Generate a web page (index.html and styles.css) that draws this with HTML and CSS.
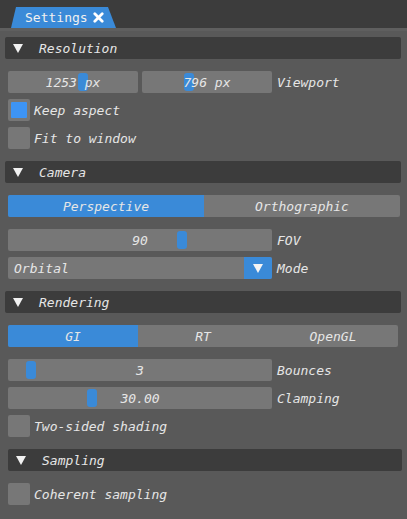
FILE: index.html
```html
<!DOCTYPE html>
<html>
<head>
<meta charset="utf-8">
<link rel="stylesheet" href="styles.css">
</head>
<body>
<div class="tabbar">
  <div class="tab">
    <span class="tab-title">Settings</span>
    <svg class="tab-close" width="11" height="11" viewBox="0 0 11 11"><path d="M1.8 1.8 L9.2 9.2 M9.2 1.8 L1.8 9.2" stroke="#fff" stroke-width="2.8" stroke-linecap="round"/></svg>
  </div>
</div>
<div class="panel">
  <section class="section">
    <div class="header"><span class="tri"></span><span class="htext">Resolution</span></div>
    <div class="body">
      <div class="row">
        <div class="field half"><span class="grab" style="left:70px"></span><span class="val">1253 px</span></div>
        <div class="field half"><span class="grab" style="left:42px"></span><span class="val">796 px</span></div>
        <span class="label">Viewport</span>
      </div>
      <div class="row"><span class="check on"><span class="mark"></span></span><span class="clabel">Keep aspect</span></div>
      <div class="row"><span class="check"></span><span class="clabel">Fit to window</span></div>
    </div>
  </section>
  <section class="section">
    <div class="header"><span class="tri"></span><span class="htext">Camera</span></div>
    <div class="body">
      <div class="seg seg2"><span class="opt sel">Perspective</span><span class="opt">Orthographic</span></div>
      <div class="row">
        <div class="field wide"><span class="grab" style="left:169px"></span><span class="val">90</span></div>
        <span class="label">FOV</span>
      </div>
      <div class="row">
        <div class="combo wide"><span class="ctext">Orbital</span><span class="cbtn"><span class="ctri"></span></span></div>
        <span class="label">Mode</span>
      </div>
    </div>
  </section>
  <section class="section">
    <div class="header"><span class="tri"></span><span class="htext">Rendering</span></div>
    <div class="body">
      <div class="seg seg3"><span class="opt sel">GI</span><span class="opt">RT</span><span class="opt">OpenGL</span></div>
      <div class="row">
        <div class="field wide"><span class="grab" style="left:18px"></span><span class="val">3</span></div>
        <span class="label">Bounces</span>
      </div>
      <div class="row">
        <div class="field wide"><span class="grab" style="left:79px"></span><span class="val">30.00</span></div>
        <span class="label">Clamping</span>
      </div>
      <div class="row"><span class="check"></span><span class="clabel">Two-sided shading</span></div>
    </div>
  </section>
  <section class="section">
    <div class="header sub"><span class="tri"></span><span class="htext">Sampling</span></div>
    <div class="body">
      <div class="row"><span class="check"></span><span class="clabel">Coherent sampling</span></div>
    </div>
  </section>
</div>
</body>
</html>
```
FILE: styles.css
```css
html, body {
  margin: 0;
  padding: 0;
}
body {
  width: 407px;
  height: 519px;
  background: #595959;
  font-family: "DejaVu Sans Mono", "Liberation Mono", monospace;
  font-size: 13px;
  font-style: oblique;
  color: #e6e6e6;
  overflow: hidden;
}
.tabbar {
  height: 28px;
  background: #3c3c3c;
  display: flex;
  align-items: flex-end;
  padding-left: 11px;
}
.tab {
  width: 105px;
  height: 21px;
  background: #3a8ad8;
  clip-path: polygon(5px 0, calc(100% - 8px) 0, 100% 100%, 0 100%);
  display: flex;
  align-items: center;
  padding-left: 14px;
  box-sizing: border-box;
  gap: 5px;
}
.tab-title {
  font-style: normal;
  color: #f0f0f0;
  line-height: 20px;
  padding-top: 1px;
}
.tab-close {
  display: block;
}
.panel {
  border-top: 3px solid #5f5f5f;
  padding: 6px 6px 0 5px;
  display: flex;
  flex-direction: column;
  gap: 12px;
}
.section {
  display: flex;
  flex-direction: column;
  gap: 12px;
}
.header {
  height: 22px;
  background: #3c3c3c;
  border-radius: 2px;
  display: flex;
  align-items: center;
  padding-left: 8px;
}
.header.sub {
  margin-left: 3px;
  margin-right: -1px;
}
.tri {
  width: 0;
  height: 0;
  border-left: 5px solid transparent;
  border-right: 5px solid transparent;
  border-top: 9px solid #f2f2f2;
  margin-right: 16px;
}
.htext, .val, .ctext, .opt, .clabel, .label {
  line-height: 20px;
  padding-top: 2px;
}
.body {
  display: flex;
  flex-direction: column;
  gap: 6px;
  padding-left: 3px;
}
.row {
  display: flex;
  align-items: center;
  height: 22px;
}
.field, .combo {
  position: relative;
  height: 22px;
  background: #777777;
  border-radius: 2px;
  display: flex;
  align-items: center;
  justify-content: center;
}
.half {
  width: 130px;
}
.half + .half {
  margin-left: 4px;
}
.wide {
  width: 264px;
}
.label {
  margin-left: 5px;
}
.grab {
  position: absolute;
  top: 2px;
  width: 10px;
  height: 18px;
  background: #3a8ad8;
  border-radius: 3px;
}
.val {
  position: relative;
}
.combo {
  justify-content: space-between;
}
.ctext {
  padding-left: 6px;
}
.cbtn {
  width: 28px;
  height: 22px;
  background: #3a8ad8;
  border-radius: 0 2px 2px 0;
  display: flex;
  align-items: center;
  justify-content: center;
}
.ctri {
  width: 0;
  height: 0;
  border-left: 5px solid transparent;
  border-right: 5px solid transparent;
  border-top: 9px solid #f4f4f4;
}
.seg {
  display: flex;
  height: 22px;
  background: #777777;
  border-radius: 2px;
  overflow: hidden;
  margin-bottom: 6px;
}
.seg2 {
  width: 392px;
}
.seg3 {
  width: 390px;
}
.opt {
  flex: 1;
  text-align: center;
}
.opt.sel {
  background: #3a8ad8;
}
.check {
  width: 22px;
  height: 22px;
  background: #777777;
  border-radius: 2px;
  display: flex;
  align-items: center;
  justify-content: center;
  margin-right: 4px;
}
.mark {
  width: 16px;
  height: 16px;
  background: #3d94f5;
  border-radius: 1px;
}
```
